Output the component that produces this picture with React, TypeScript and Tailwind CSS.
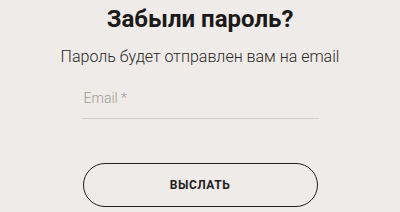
import React from 'react';

const App: React.FC = () => {
  return (
    <div className="w-[400px] h-[212px] bg-[#efebe8] flex flex-col items-center overflow-hidden font-['Roboto',sans-serif]">
      <h1 className="mt-[5px] text-[24px] leading-[28px] font-bold text-[#1b1a19]">
        Забыли пароль?
      </h1>
      <p className="mt-[14px] text-[16px] leading-[20px] font-light text-[#2a2826]">
        Пароль будет отправлен вам на email
      </p>
      <div className="mt-[23px] w-[237px] border-b border-[#d3cfcb] pb-[11px] pl-[2px]">
        <span className="block text-[14px] leading-[17px] font-light text-[#9d9995]">Email *</span>
      </div>
      <button className="mt-[44px] w-[235px] h-[44px] rounded-full border-[1.5px] border-[#232120] text-[12px] font-bold tracking-[0.5px] text-[#232120]">
        ВЫСЛАТЬ
      </button>
    </div>
  );
};

export default App;
